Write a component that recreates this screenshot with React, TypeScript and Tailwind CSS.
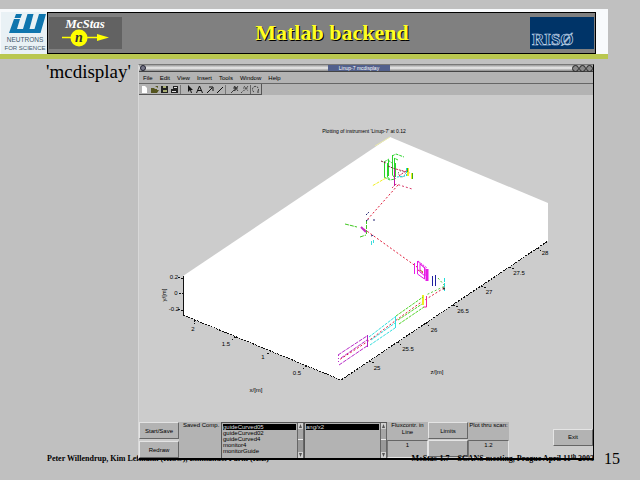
import React from "react";

const sans = "font-['Liberation_Sans',Arial,sans-serif]";
const serif = "font-['Liberation_Serif','Times_New_Roman',serif]";

function IllLogo() {
  return (
    <svg className="h-[42px] w-[47px] shrink-0" viewBox="0 0 47 42" role="img" aria-label="ILL Neutrons for Science">
      <rect x="1" width="46" height="42" fill="#e9f1f5" />
      <g fill="#0e75ae">
        <path d="M16 2h6l-1.500 4h-6z" />
        <path d="M14 7h6l-3 10h6l4.500-15h6l-4 15h5l4.500-15h7l-5.500 19H9z" />
      </g>
      <g className={sans} fill="#43586a" fontSize="7" textAnchor="middle">
        <text x="25" y="30" fontSize="6.500">NEUTRONS</text>
        <text x="25" y="38" fontSize="6">FOR SCIENCE</text>
      </g>
    </svg>
  );
}

function McStasLogo() {
  return (
    <svg className="h-8 w-[73px] shrink-0" viewBox="0 0 73 32" role="img" aria-label="McStas">
      <rect width="73" height="32" fill="#626262" />
      <text x="36" y="11" textAnchor="middle" className={serif} fontSize="13" fontWeight="bold" fontStyle="italic" fill="#fff">McStas</text>
      <path d="M13 20.500h38" stroke="#ff0" strokeWidth="1.500" />
      <path d="M48 17l12 3.500-12 3.500z" fill="#ff0" />
      <circle cx="30" cy="21" r="8.500" fill="#ff0" />
      <text x="30" y="25" textAnchor="middle" className={serif} fontSize="14" fontWeight="bold" fontStyle="italic" fill="#333">n</text>
    </svg>
  );
}

function RisoLogo() {
  return (
    <svg className="h-8 w-16 shrink-0" viewBox="0 0 64 32" role="img" aria-label="RISØ">
      <rect width="64" height="32" fill="#003468" />
      <text x="2" y="28" className={serif} fontSize="17" fontWeight="bold" fill="#003468" stroke="#c5dbee" strokeWidth="0.700">RISØ</text>
    </svg>
  );
}

const tools: [string, React.ReactNode][] = [
  ["New", <path key="a" d="M2 1h3l2 2v5H2z" fill="#fff" />],
  ["Open", <path key="a" d="M1 7V3h3l1 1h2v1h2L7 8H1zM5 1h3v2" fill="#55551f" />],
  ["Save", <><path d="M1 1h7v7H1z" fill="#222" /><path d="M3 1h3v2H3zM3 5h4v2H3z" fill="#a9ae74" /></>],
  ["Print", <><path d="M3 1h5v3H3zM1 4h7v4H1z" fill="#222" /><path d="M4 2h3v1H4zM2 6h4v1H2z" fill="#ddd" /></>],
  ["Select", <path key="a" d="M3 0v7l2-2 1 3h1L6 5h2z" fill="#111" />],
  ["Text", <path key="a" d="M1.500 8L4.500 1l3 7M3 5.500h3" fill="none" stroke="#111" />],
  ["Arrow", <path key="a" d="M2 8l5-5M4 2h4v4" fill="none" stroke="#111" />],
  ["Line", <path key="a" d="M2 8l6-6" stroke="#111" />],
  ["Zoom in", <path key="a" d="M1 8l3-3M5 1v5M3 3h5M4 1l4 5M8 1L4 6" fill="none" stroke="#222" strokeWidth=".8" />],
  ["Zoom out", <path key="a" d="M1 8l3-3M3 3h5M4 1l4 5M8 1L4 6" fill="none" stroke="#333" strokeWidth=".8" strokeDasharray="1.500 .7" />],
  ["Rotate", <path key="a" d="M3 7a3 3 0 1 1 4-1M7 8V5" fill="none" stroke="#333" strokeDasharray="2 1" />],
];

const menus = ["File", "Edit", "View", "Insert", "Tools", "Window", "Help"];

const zTicks = [
  { x: 373, y: 370, label: "25" },
  { x: 404, y: 351, label: "25.5" },
  { x: 430, y: 332, label: "26" },
  { x: 459, y: 313, label: "26.5" },
  { x: 485, y: 294, label: "27" },
  { x: 515, y: 275, label: "27.5" },
  { x: 541, y: 255, label: "28" },
];

const xTicks = [
  { x: 193, y: 331, label: "2" },
  { x: 226, y: 346, label: "1.5" },
  { x: 263, y: 359, label: "1" },
  { x: 297, y: 375, label: "0.5" },
];

function Plot() {
  return (
    <svg className="block w-full bg-[#cccccc]" viewBox="139 95 454 327" role="img" aria-label="Instrument view">
      <path d="M390 137l158 66v38L341 380l-158-65v-39z" fill="#fff" />
      <path d="M375 146l15-9" stroke="#ebebaa" />
      <g stroke="#111" fill="none" shapeRendering="crispEdges">
        <path d="M183.500 276v39" />
        <path d="M183 315l158 65 207-139" strokeDasharray="2 1" />
        <path d="M178 277l5 2M179 293h4M178 309l5 2M195 320l-1 4M236 337l-5 3M271 351l-5 4M307 366l-5 3" strokeDasharray="2 1" />
        <path d="M369 361l5 2M397 342l5 3M425 323l5 3M453 305l5 2M481 286l5 2M509 267l5 2M537 248l5 3" strokeDasharray="2 1" />
      </g>
      <g className={sans} fontSize="6" fill="#000" textAnchor="middle">
        <text x="364" y="133" fontSize="5">Plotting of instrument 'Linup-7' at 0.12</text>
        <text x="174" y="279">0.2</text>
        <text x="176" y="295">0</text>
        <text x="174" y="311">-0.2</text>
        <text transform="translate(166 295) rotate(-90)">y/[m]</text>
        <text x="256" y="392">x/[m]</text>
        <text x="437" y="374">z/[m]</text>
        {xTicks.map((t) => <text key={t.label} x={t.x} y={t.y}>{t.label}</text>)}
        {zTicks.map((t) => <text key={t.label} x={t.x + 4} y={t.y}>{t.label}</text>)}
      </g>
      <g fill="none">
        <g stroke="#e01f3c" strokeDasharray="2 2">
          <path d="M398 185l-31 35M364 229l53 38" />
          <path d="M418 270l5 3M444 288l-24 15-25 18-28 21-28 18" />
        </g>
        <path d="M384.500 162v15M387.500 163v14l2 2M388.500 160v16M392.500 155v20l3 4M394.500 158v21M395.500 163v14" stroke="#2bd42b" />
        <path d="M384 162l5-3M392 156l4-2 8 3M388 160l4 3M384 177l6 3 5-1M398 160l-4-2" stroke="#2bd42b" strokeDasharray="3 1" />
        <path d="M381 161l5 2M388 166l7 3" stroke="#7a2038" strokeDasharray="2 1" />
        <path d="M394.500 169v17" stroke="#c018a8" />
        <path d="M392 188l4-4 16 5" stroke="#d83a6a" strokeDasharray="2 2" />
        <path d="M396 169l14 4M399 176l8-6" stroke="#d02050" strokeDasharray="2 1" />
        <path d="M398 173l4-3 4 4-5 4z" stroke="#555" strokeDasharray="1 2" />
        <path d="M406.500 168v9M397 177l9-1" stroke="#18dada" strokeDasharray="2 1" />
        <path d="M408 168v8M412 173v6" stroke="#efef22" strokeWidth="2" />
        <path d="M386 178l-14 8" stroke="#efef22" strokeDasharray="3 1" />
        <path d="M407.500 168v4M412.500 173v6" stroke="#38b018" />
        <path d="M366.500 220v15M345 224l12 3M360 237l6-2" stroke="#40c820" strokeDasharray="4 1" />
        <path d="M366 215l3-3M366 221l3-2M374 219v2M371 236l3-1" stroke="#202070" strokeDasharray="2 1" />
        <path d="M361 227l5 5" stroke="#c02ec0" strokeWidth="2" />
        <path d="M371.500 241v4M373.500 240v3" stroke="#3edddd" />
        <g stroke="#e61ce6">
          <path d="M414.500 263v11M417.500 261v13l7 5v-11zM420 264l5 4v8l-5-4z" />
          <path d="M427 269v12" strokeWidth="3" />
          <path d="M418 261l9 7" strokeDasharray="2 1" />
        </g>
        <path d="M420 270l3 2" stroke="#b66030" />
        <path d="M432.500 276v10M435.500 275v11" stroke="#2020a0" />
        <path d="M438 278l7 8-19 9" stroke="#58c840" strokeDasharray="2 2" />
        <path d="M444.500 278v13" stroke="#20dddd" strokeDasharray="4 1" />
        <path d="M443 288.500h2" stroke="#333" strokeWidth="2" />
        <path d="M423 295v10" stroke="#eeee22" strokeWidth="2" />
        <path d="M426.500 296v11h-3" stroke="#f0249c" />
        <path d="M338 355l29-19M341 358l26-18M339 365l28-19" stroke="#b82cc8" strokeDasharray="4 1" />
        <path d="M338.500 355v9" stroke="#b82cc8" strokeDasharray="1 2" />
        <path d="M367.500 335v12" stroke="#b020c0" />
        <path d="M369 337l26-20M370 345l25-17M371 340l24-17" stroke="#32dede" strokeDasharray="3 1" />
        <path d="M395.500 316v12" stroke="#32dede" />
        <path d="M396 316l27-19M399 324l25-17M398 320l24-16" stroke="#50d428" strokeDasharray="3 1" />
      </g>
    </svg>
  );
}

const raised = "border border-t-[#e4e4e4] border-l-[#e4e4e4] border-r-[#666666] border-b-[#666666] bg-[#b3b3b3]";

function PushButton({ children }: { children?: React.ReactNode }) {
  return <button type="button" className={`h-[17px] w-10 text-[6px] leading-[8px] ${raised}`}>{children}</button>;
}

function Field({ label, text, value }: { label: string; text: string; value: string }) {
  return (
    <label className="flex w-[41px] flex-col bg-[#b3b3b3] text-center text-[6px] leading-[7px]">
      <span className="h-[18px]">{text}</span>
      <input aria-label={label} defaultValue={value} className="h-[18px] w-full border border-t-[#666666] border-l-[#777777] border-r-[#e4e4e4] border-b-[#e4e4e4] pb-2 text-center outline-none" />
    </label>
  );
}

function ListBox({ label, items }: { label: string; items: string[] }) {
  return (
    <div className="flex h-9 w-[83px] border-t border-l border-[#555555] bg-[#b3b3b3]">
      <select
        size={5}
        aria-label={label}
        defaultValue={items[0]}
        className="min-w-0 flex-1 appearance-none overflow-hidden bg-transparent bg-none p-px text-[6px] leading-[7px] text-black outline-none [scrollbar-width:none]"
      >
        {items.map((item) => (
          <option key={item} className="min-h-0 p-0 leading-[7px] checked:bg-[linear-gradient(#000,#000)] checked:text-white checked:[-webkit-text-fill-color:#ddd]">{item}</option>
        ))}
      </select>
      <div className="flex w-[7px] flex-col items-center justify-between border-x border-[#666666] bg-[#8f8f8f]">
        <span className="flex h-[6px] w-full items-center justify-center bg-[#d0d0d0]">
          <svg className="h-1 w-[3px]" viewBox="0 0 3 4"><path d="M1.500 0L3 4H0z" fill="#555" /></svg>
        </span>
        <span className="w-full flex-1 border-b border-[#eeeeee] bg-[#a6a6a6]" />
        <span className="h-3 w-full bg-[#9a9a9a]" />
        <span className="flex h-[6px] w-full items-center justify-center bg-[#d0d0d0]">
          <svg className="h-1 w-[3px]" viewBox="0 0 3 4"><path d="M1.500 4L3 0H0z" fill="#555" /></svg>
        </span>
      </div>
    </div>
  );
}

function MatlabWindow() {
  return (
    <section className={`relative border border-t-[#777777] border-l-[#d8d8d8] border-r-black border-b-2 border-b-black bg-[#b3b3b3] text-black ${sans}`}>
      <div className="flex h-[7px] items-center justify-between border-b border-[#444444] bg-linear-to-b from-[#999999] via-[#eeeeee] to-[#888888]">
        <button type="button" aria-label="Window menu" className="ml-px size-[6px] rounded-full border border-[#222233] bg-[#777788]" />
        <h2 className="h-[6px] w-[62px] bg-[#52608c] text-center text-[5px] leading-[6px] text-white">Linup-7 mcdisplay</h2>
        <div className="flex">
          {["Minimise", "Maximise", "Close"].map((n) => (
            <button key={n} type="button" aria-label={n} className="size-[7px] rounded-full border border-[#222222] bg-[#888888]" />
          ))}
        </div>
      </div>
      <nav className="flex h-3 items-center gap-[7px] border-b border-[#666666] pl-1 text-[6px] leading-[8px]">
        {menus.map((m) => <button key={m} type="button">{m}</button>)}
      </nav>
      <div className="flex h-[11px]">
        <div className="flex items-center border-r border-b border-[#555555] pl-px">
          {tools.map(([name, icon], i) => (
            <button key={name} type="button" aria-label={name} className={i === 4 || i === 8 ? "border-l border-[#777777] pl-1" : i === 10 ? "border-l border-[#666666]" : ""}>
              <svg className="h-[9px] w-[10px]" viewBox="0 0 10 9">{icon}</svg>
            </button>
          ))}
        </div>
      </div>
      <Plot />
      <div className="flex h-9 bg-[#cccccc]">
        <div className="flex flex-col gap-[2px]">
          <PushButton>Start/Save</PushButton>
          <PushButton>Redraw</PushButton>
        </div>
        <div className="w-[42px] bg-[#b3b3b3] pl-1 text-[6px] leading-[7px] whitespace-nowrap">Saved Comp.</div>
        <ListBox label="Saved components" items={["guideCurved05", "guideCurved02", "guideCurved4", "monitor4", "monitorGuide"]} />
        <ListBox label="Views" items={["ang/x2"]} />
        <Field label="Fluxcontr. in line" text="Fluxcontr. in Line" value="1" />
        <div className="flex flex-col gap-px">
          <PushButton>Limits</PushButton>
          <PushButton />
        </div>
        <Field label="Plot thru scan" text="Plot thru scan:" value="1.2" />
        <div className="ml-auto">
          <PushButton>Exit</PushButton>
        </div>
      </div>
    </section>
  );
}

export default function App() {
  return (
    <div className={`min-h-screen bg-[#c0c0c0] pt-[9px] text-black ${serif}`}>
      <header className="mr-8 flex border-b-[5px] border-[#b9c750] bg-[#f8fafc] pt-[3px]">
        <IllLogo />
        <div className="mr-3 flex flex-1 items-center justify-between border border-black bg-[#808080] px-px">
          <McStasLogo />
          <h1 className="pl-3 text-[22px] leading-[28px] font-bold text-[#ffff22] [text-shadow:1px_1px_0_#000]">Matlab backend</h1>
          <RisoLogo />
        </div>
      </header>
      <main className="flex items-start pt-[5px] pr-[46px] pl-[46px]">
        <p className="w-[92px] shrink-0 text-[19px] leading-[16px]">'mcdisplay'</p>
        <div className="z-10 min-w-0 flex-1">
          <MatlabWindow />
        </div>
      </main>
      <footer className="-mt-[9px] flex items-center pr-5 pl-[47px] text-[8px] leading-[16px] font-bold">
        <span>Peter Willendrup, Kim Lefmann (RISØ), Emmanuel Farhi (ILL)</span>
        <span className="relative z-20 ml-auto">McStas-1.7 – SCANS meeting, Prague April 11<sup className="text-[6px] leading-none">th</sup> 2003</span>
        <span className="relative z-20 ml-[10px] text-[16px] font-normal">15</span>
      </footer>
    </div>
  );
}
